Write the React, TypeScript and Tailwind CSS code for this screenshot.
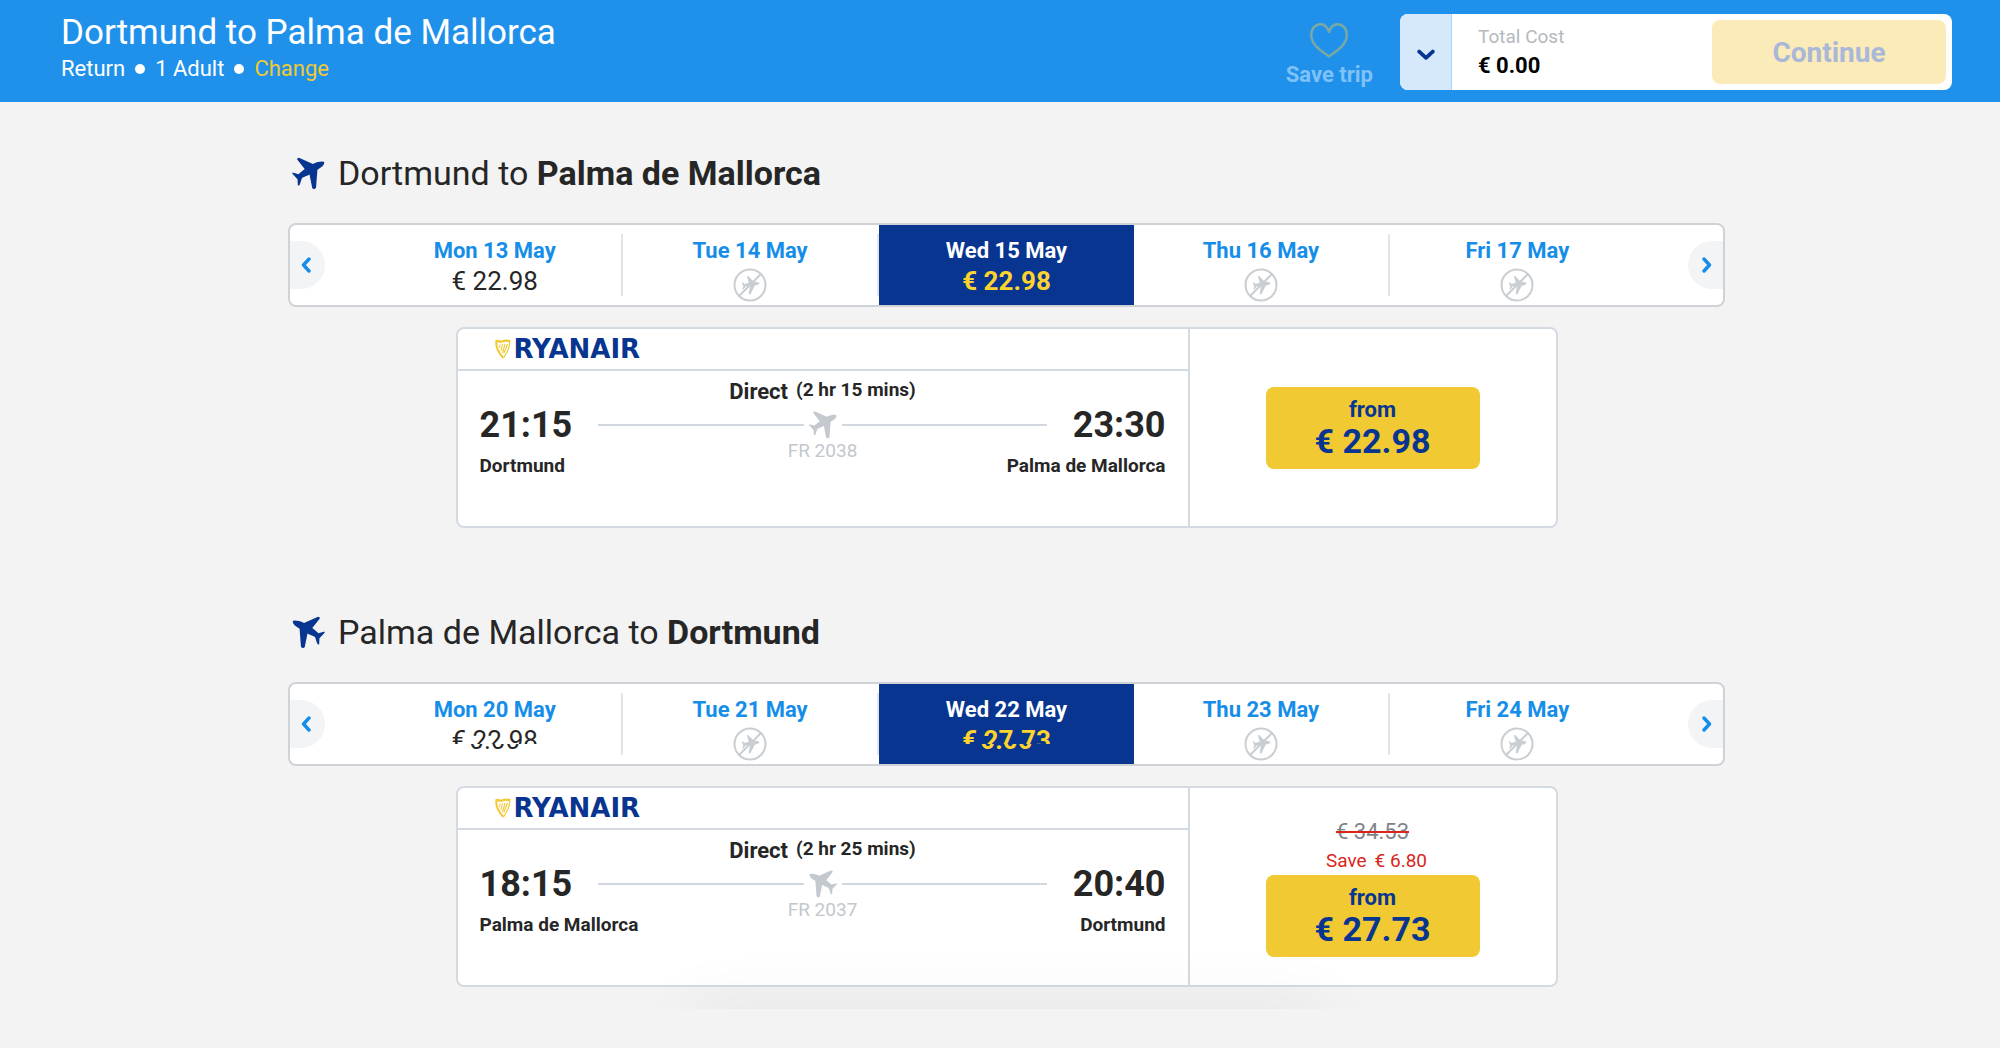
import clsx from 'clsx';

type Day = {
  label: string;
  price?: string;
  rolling?: boolean;
};

type Trip = {
  id: string;
  from: string;
  to: string;
  inbound?: boolean;
  days: Day[];
  departure: string;
  arrival: string;
  duration: string;
  flightNumber: string;
  price: string;
  oldPrice?: string;
  saving?: string;
};

const SELECTED_DAY = 2;

const trips: Trip[] = [
  {
    id: 'outbound',
    from: 'Dortmund',
    to: 'Palma de Mallorca',
    days: [
      { label: 'Mon 13 May', price: '€ 22.98' },
      { label: 'Tue 14 May' },
      { label: 'Wed 15 May', price: '€ 22.98' },
      { label: 'Thu 16 May' },
      { label: 'Fri 17 May' },
    ],
    departure: '21:15',
    arrival: '23:30',
    duration: '(2 hr 15 mins)',
    flightNumber: 'FR 2038',
    price: '€ 22.98',
  },
  {
    id: 'inbound',
    from: 'Palma de Mallorca',
    to: 'Dortmund',
    inbound: true,
    days: [
      { label: 'Mon 20 May', price: '€ 22.98', rolling: true },
      { label: 'Tue 21 May' },
      { label: 'Wed 22 May', price: '€ 27.73', rolling: true },
      { label: 'Thu 23 May' },
      { label: 'Fri 24 May' },
    ],
    departure: '18:15',
    arrival: '20:40',
    duration: '(2 hr 25 mins)',
    flightNumber: 'FR 2037',
    price: '€ 27.73',
    oldPrice: '€ 34.53',
    saving: '€ 6.80',
  },
];

const PLANE_PATH =
  'M117 42C116 50 108 56 97 62L93 114Q92 119 86 118L82 116L74 76C66 80 60 82 52 86L46 104Q44 109 40 108L39 90L24 74Q22 70 27 71L42 75C48 70 54 64 60 60L38 32Q37 27 43 27L48 29L84 45C94 40 104 38 110 38Q118 38 117 42Z';

const Plane = ({ className }: { className?: string }) => (
  <svg viewBox="20 22 102 102" className={className} aria-hidden="true">
    <path d={PLANE_PATH} fill="currentColor" />
  </svg>
);

const NoFlight = () => (
  <svg
    viewBox="0 0 34 34"
    className="size-[34px] shrink-0 text-[#c9ced3]"
    role="img"
    aria-label="No flights"
  >
    <circle cx="17" cy="17" r="15.5" fill="none" stroke="currentColor" strokeWidth="2" />
    <g transform="translate(17 17) rotate(22) scale(0.18) translate(-71 -69)">
      <path d={PLANE_PATH} fill="currentColor" />
    </g>
    <path d="M6 28 28 6" stroke="currentColor" strokeWidth="2" />
  </svg>
);

const Chevron = ({ className }: { className?: string }) => (
  <svg viewBox="0 0 10 16" className={className} aria-hidden="true">
    <path
      d="M8 2 2.5 8 8 14"
      fill="none"
      stroke="currentColor"
      strokeWidth="3.4"
      strokeLinecap="round"
      strokeLinejoin="round"
    />
  </svg>
);

const Heart = () => (
  <svg viewBox="0 0 38 35" className="h-[35px] w-[38px] text-[#7aa9a3]" aria-hidden="true">
    <path
      d="M19 33.5C14 29.5 1.2 23 1.2 12C1.2 5.5 5.5 1.2 10.5 1.2C14.5 1.2 17.5 4 19 9C20.5 4 23.5 1.2 27.5 1.2C32.5 1.2 36.8 5.5 36.8 12C36.8 23 24 29.5 19 33.5Z"
      fill="none"
      stroke="currentColor"
      strokeWidth="2.4"
      strokeLinejoin="round"
    />
  </svg>
);

const Logo = () => (
  <div className="flex items-center gap-[3px] text-[#073590]">
    <svg viewBox="0 0 16 20" className="h-5 w-4" fill="none" stroke="#f1c933" aria-hidden="true">
      <path d="M1 2.5C3 .8 4.5 3.5 7 2.5S12 1 15.2 2.5" strokeWidth="2.4" />
      <path d="M1.5 2C.5 7 3 13 8.5 19" strokeWidth="2" />
      <path d="M14.8 3C14.5 8 12 14 8.8 18.5" strokeWidth="1.2" />
      <path d="M5 5.5 4.5 9M7.5 5 6 12M10 5 7.5 14M12.5 5 9 14" strokeWidth="1.1" />
    </svg>
    <span className="font-['DejaVu_Sans',sans-serif] text-[26px] leading-6 font-bold">
      RYANAIR
    </span>
  </div>
);

const Header = () => (
  <header className="flex items-center bg-[#2091eb] pt-3 pr-[48px] pb-[10px] pl-[61px] text-white">
    <div className="flex-1 pb-2">
      <h1 className="text-[35px] leading-[42px]">Dortmund to Palma de Mallorca</h1>
      <p className="flex items-center gap-[10px] text-[22px] leading-[30px]">
        <span>Return</span>
        <span className="size-[10px] rounded-full bg-white" />
        <span>1 Adult</span>
        <span className="size-[10px] rounded-full bg-white" />
        <a href="#change" className="text-[#f1c933]">
          Change
        </a>
      </p>
    </div>

    <button
      type="button"
      className="mr-[27px] flex flex-col items-center gap-[2px] pt-2 text-[22px] leading-[30px] font-bold text-[#7fc2f7]"
    >
      <Heart />
      Save trip
    </button>

    <div className="flex h-[76px] w-[552px] overflow-hidden rounded-lg bg-white">
      <button
        type="button"
        aria-label="Show price breakdown"
        className="flex w-[52px] items-center justify-center border-r border-[#a9d2f7] bg-[#d5e9fb] pt-[6px] text-[#073590]"
      >
        <Chevron className="h-[18px] w-3 -rotate-90" />
      </button>
      <div className="flex flex-1 flex-col justify-center pb-[2px] pl-[26px]">
        <span className="text-[19px] leading-[29px] text-[#b5b9bd]">Total Cost</span>
        <span className="text-[22px] leading-[29px] font-bold text-black">€ 0.00</span>
      </div>
      <button
        type="button"
        disabled
        className="m-[6px] w-[234px] rounded-lg bg-[#fbebb8] pt-[2px] text-[28px] font-bold text-[#a9b7d8]"
      >
        Continue
      </button>
    </div>
  </header>
);

// Two price reels on top of each other, each one cut where the roll has got to
const RollingPrice = ({ price }: { price: string }) => (
  <span className="grid justify-items-center">
    <span className="col-start-1 row-start-1 [clip-path:inset(0_0_9px_0)]">{price}</span>
    <span
      aria-hidden="true"
      className="col-start-1 row-start-1 [clip-path:inset(17px_0_0_0)]"
    >
      0.00
    </span>
  </span>
);

const DayButton = ({ day, index }: { day: Day; index: number }) => {
  const selected = index === SELECTED_DAY;
  const divider = index === 0 || index === 1 || index === 3;

  return (
    <button
      type="button"
      aria-pressed={selected}
      className={clsx('flex flex-1', selected ? 'bg-[#073590]' : 'py-[9px]')}
    >
      <span
        className={clsx(
          'flex flex-1 flex-col items-center',
          selected && 'pt-[9px]',
          divider && 'border-r-2 border-[#e1e4e8]'
        )}
      >
        <span
          className={clsx(
            'text-[22px] leading-[34px] font-bold',
            selected ? 'text-white' : 'text-[#168ee9]'
          )}
        >
          {day.label}
        </span>
        {day.price ? (
          <span
            className={clsx(
              'text-[26px] leading-[26px]',
              selected ? 'font-bold text-[#fdd32f]' : 'text-[#262626]'
            )}
          >
            {day.rolling ? <RollingPrice price={day.price} /> : day.price}
          </span>
        ) : (
          <NoFlight />
        )}
      </span>
    </button>
  );
};

const DateCarousel = ({ days }: { days: Day[] }) => (
  <div className="flex h-[84px] overflow-hidden rounded-lg border-2 border-[#cfd3d8] bg-white">
    <div className="flex w-[78px] items-center">
      <button
        type="button"
        aria-label="Previous days"
        className="flex h-12 w-[35px] items-center justify-center rounded-r-full bg-[#f2f4f6] pr-1 text-[#168ee9]"
      >
        <Chevron className="h-4 w-[10px]" />
      </button>
    </div>
    {days.map((day, index) => (
      <DayButton key={day.label} day={day} index={index} />
    ))}
    <div className="flex w-[78px] items-center justify-end">
      <button
        type="button"
        aria-label="Next days"
        className="flex h-12 w-[35px] items-center justify-center rounded-l-full bg-[#f2f4f6] pl-[2px] text-[#168ee9]"
      >
        <Chevron className="h-4 w-[10px] rotate-180" />
      </button>
    </div>
  </div>
);

const FlightCard = ({ trip }: { trip: Trip }) => (
  <article className="mx-auto mt-5 flex h-[201px] max-w-[1102px] rounded-lg border-2 border-[#d3dae1] bg-white text-[#262626]">
    <div className="flex-1 border-r-2 border-[#d3dae1]">
      <div className="flex h-[42px] items-center border-b-2 border-[#d3dae1] pl-[37px]">
        <Logo />
      </div>
      <div className="px-[22px] pt-1 font-bold">
        <p className="flex justify-center gap-2 leading-[30px]">
          <span className="pt-[2px] text-[22px]">Direct</span>
          <span className="text-[19px]">{trip.duration}</span>
        </p>
        <div className="mt-[2px] flex h-8 items-center gap-[26px]">
          <span className="text-[36px] leading-8">{trip.departure}</span>
          <div className="flex flex-1 items-center gap-1">
            <span className="h-[2px] flex-1 bg-[#d0d7de]" />
            <Plane className={clsx('size-[30px] text-[#c3c9cf]', trip.inbound && '-scale-x-100')} />
            <span className="h-[2px] flex-1 bg-[#d0d7de]" />
          </div>
          <span className="text-[36px] leading-8">{trip.arrival}</span>
        </div>
        <div className="grid grid-cols-[1fr_auto_1fr] text-[19px] leading-5">
          <span className="pt-[15px]">{trip.from}</span>
          <span className="font-normal text-[#c3c8cd]">{trip.flightNumber}</span>
          <span className="pt-[15px] text-right">{trip.to}</span>
        </div>
      </div>
    </div>
    <div className="flex w-[366px] flex-col items-center justify-center">
      {trip.oldPrice && (
        <>
          <s className="text-[22px] leading-[30px] text-[#7f8489] decoration-[#d9261c] decoration-2">
            {trip.oldPrice}
          </s>
          <p className="flex gap-2 pl-2 text-[19px] leading-7 text-[#d9261c]">
            <span>Save</span>
            <span>{trip.saving}</span>
          </p>
        </>
      )}
      <button
        type="button"
        className="flex h-[82px] w-[214px] flex-col items-center justify-center rounded-lg bg-[#f1c933] pb-[2px] font-bold text-[#073590]"
      >
        <span className="text-[22px] leading-7">from</span>
        <span className="text-[34px] leading-[34px]">{trip.price}</span>
      </button>
    </div>
  </article>
);

const TripSection = ({ trip }: { trip: Trip }) => (
  <section>
    <h2 className="mb-6 flex h-[52px] items-center gap-3 text-[34px] text-[#262626]">
      <Plane
        className={clsx('ml-[3px] size-[35px] text-[#073590]', trip.inbound && '-scale-x-100')}
      />
      <span>
        {trip.from} to <b className="font-bold">{trip.to}</b>
      </span>
    </h2>
    <DateCarousel days={trip.days} />
    <FlightCard trip={trip} />
  </section>
);

export default function App() {
  return (
    <div className="min-h-screen bg-[#f3f3f3] font-[Roboto,sans-serif]">
      <Header />
      <main className="relative pt-[45px] pb-[22px] pl-[13px]">
        <div className="mx-auto flex max-w-[1437px] flex-col gap-[78px]">
          {trips.map((trip) => (
            <TripSection key={trip.id} trip={trip} />
          ))}
        </div>
        {/* Shade of the bar that slides in from below */}
        <div className="pointer-events-none absolute inset-x-0 bottom-0 h-14 overflow-hidden pl-[13px]">
          <div className="mx-auto mt-14 h-5 w-[640px] shadow-[0_0_60px_rgba(0,0,0,0.1)]" />
        </div>
      </main>
    </div>
  );
}
